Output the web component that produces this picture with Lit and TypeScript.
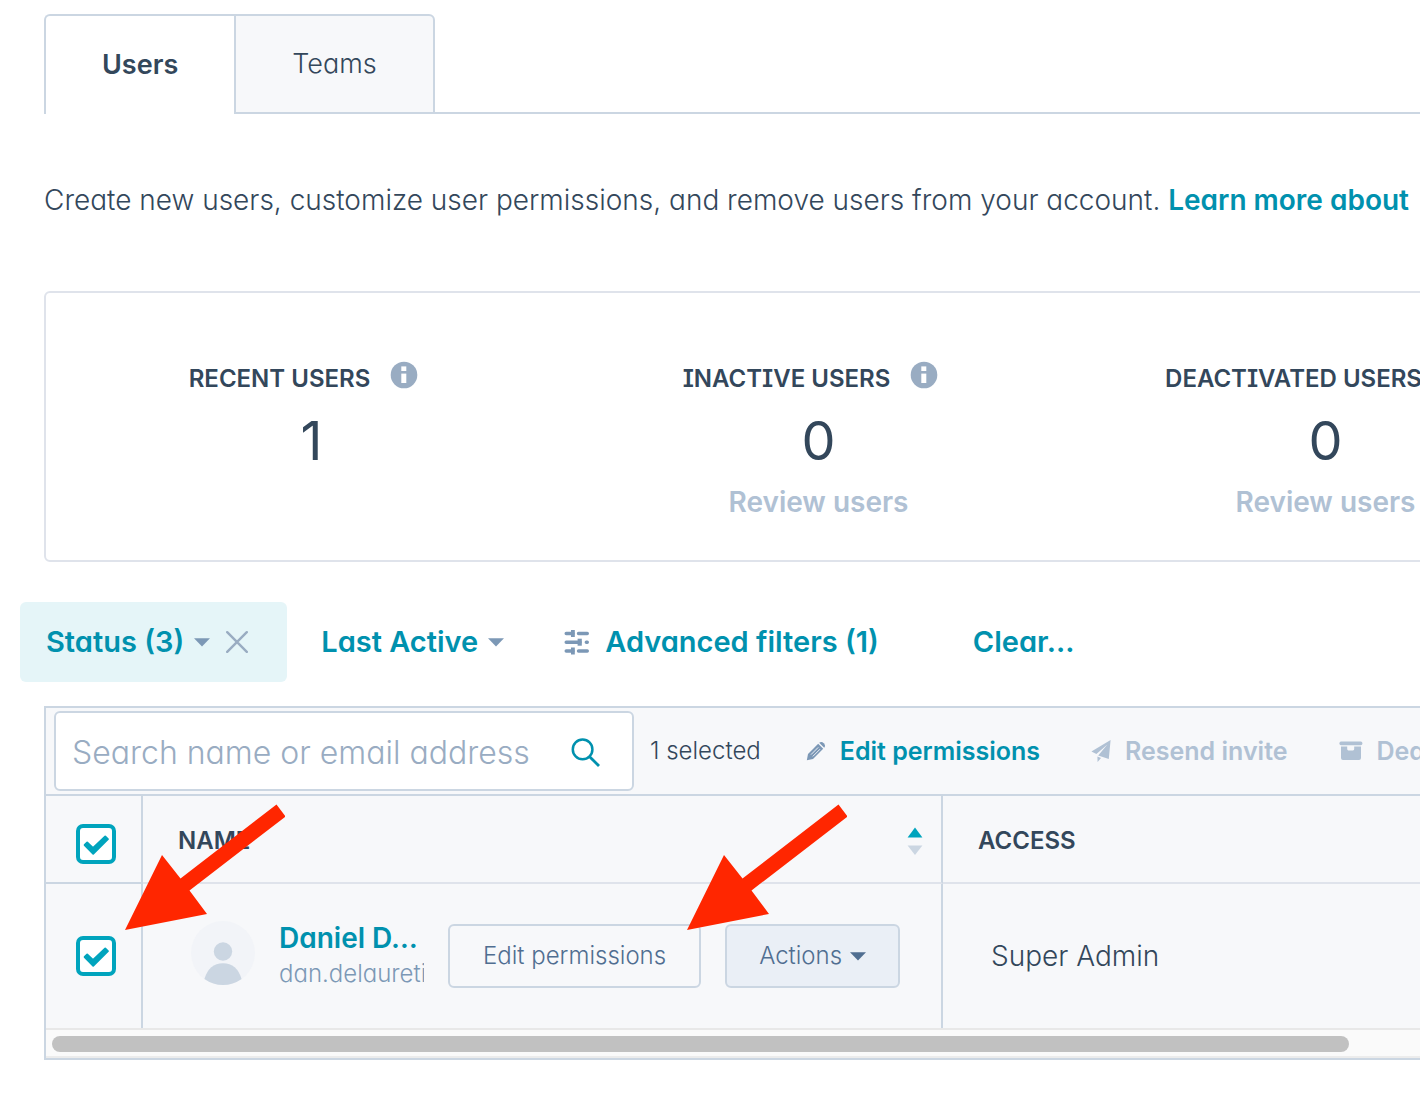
import { LitElement, html, css, svg, nothing } from "lit";
import { customElement, state } from "lit/decorators.js";

const iconInfo = svg`<svg class="info" viewBox="0 0 28 28" aria-hidden="true">
  <circle cx="14" cy="14" r="13.3" fill="#99acc2"/>
  <rect x="11.3" y="5.4" width="5" height="4.6" fill="#fff"/>
  <rect x="11.3" y="12.6" width="5" height="9.4" fill="#fff"/></svg>`;

const iconCaret = svg`<svg class="caret" viewBox="0 0 16 9" aria-hidden="true">
  <path d="M0 0.3H16L8 8.6Z" fill="currentColor"/></svg>`;

const iconClose = svg`<svg class="close" viewBox="0 0 22 22" aria-hidden="true">
  <path d="M1.2 1.2L20.8 20.8M20.8 1.2L1.2 20.8" stroke="#99acc2" stroke-width="2.4" stroke-linecap="round"/></svg>`;

const iconFilters = svg`<svg class="filters-icon" viewBox="0 0 26 26" aria-hidden="true">
  <g stroke="#7c98b6" stroke-width="3.4" stroke-linecap="round">
    <path d="M2.2 4.5H9M14.5 4.5H23.3M2.2 13.2H16M22.3 13.2H23.3M2.2 22H9M14.5 22H23.3"/></g>
  <g fill="#7c98b6"><rect x="7" y="1" width="3.8" height="7"/><rect x="13.6" y="9.7" width="4.2" height="7"/><rect x="7" y="18.5" width="3.8" height="7"/></g></svg>`;

const iconSearch = svg`<svg class="search-icon" viewBox="0 0 30 30" aria-hidden="true">
  <circle cx="12.6" cy="11.4" r="9.8" fill="none" stroke="#0091ae" stroke-width="2.5"/>
  <path d="M19.4 18.4L29 28" stroke="#0091ae" stroke-width="2.8"/></svg>`;

const iconPencil = svg`<svg class="act-icon" viewBox="0 0 20 20" aria-hidden="true">
  <path d="M0.8 19.2L2 13L12.2 2.8L17.2 7.8L7 18Z" fill="#7c98b6"/>
  <path d="M13.2 1.8Q15.4 0 17.8 2.2Q20 4.6 18.2 6.8Z" fill="#7c98b6"/>
  <path d="M5 13.6L12.2 6.4M6.8 15.4L14 8.2" stroke="#f7f8fa" stroke-width="0.9"/></svg>`;

const iconPlane = svg`<svg class="act-icon" viewBox="0 0 20 22" aria-hidden="true">
  <path d="M19.6 0L0.4 11.4L5.4 14L16.4 4.4L7.2 15.4L17.8 19Z" fill="currentColor"/>
  <path d="M6.4 16.6L10 18L6.6 22Z" fill="currentColor"/></svg>`;

const iconBox = svg`<svg class="box-icon" viewBox="0 0 24 20" aria-hidden="true">
  <rect x="0.4" y="0.6" width="23" height="3.6" rx="1.6" fill="currentColor"/>
  <path d="M2 5.6H8.2V8Q8.2 9.4 9.4 9.4H14Q15.2 9.4 15.2 8V5.6H22V17Q22 19 20 19H4Q2 19 2 17Z" fill="currentColor"/></svg>`;

const iconSort = svg`<svg class="sort-icon" viewBox="0 0 16 28" aria-hidden="true">
  <path d="M0.6 10.5L8 0.6L15.4 10.5Z" fill="#00a4bd"/>
  <path d="M0.6 18.5H15.4L8 28Z" fill="#cbd6e2"/></svg>`;

const iconAvatar = svg`<svg class="avatar" viewBox="0 0 64 64" aria-hidden="true">
  <circle cx="32" cy="32" r="32" fill="#f2f4f8"/>
  <circle cx="32" cy="30.5" r="9.2" fill="#cbd6e2"/>
  <path d="M13.4 58Q18 42.4 32 42.2Q46 42.4 50.6 58Q42 64 32 64Q22 64 13.4 58Z" fill="#cbd6e2"/></svg>`;

interface Stat { label: string; value: number; review: boolean; }

@customElement("stat-column")
class StatColumn extends LitElement {
  static properties = { stat: { attribute: false } };
  declare stat: Stat;
  static styles = css`
    :host { display: flex; flex-direction: column; align-items: center; }
    .label { display: flex; align-items: center; gap: 20px; margin: 0 16px 0 0; height: 36px; font-size: 24px; font-weight: 600; line-height: 36px; white-space: nowrap; }
    .info { width: 28px; height: 28px; flex: none; margin-bottom: 8px; }
    .value { font-size: 54px; font-weight: 400; line-height: 64px; margin-top: 12px; }
    .review { border: 0; padding: 0; background: none; font: inherit; font-weight: 600; color: #b0c1d4; line-height: 36px; margin-top: 11px; }
  `;
  render() {
    return html`<h2 class="label">${this.stat.label}${iconInfo}</h2>
      <div class="value">${this.stat.value}</div>
      ${this.stat.review ? html`<button class="review" disabled>Review users</button>` : nothing}`;
  }
}

@customElement("app-root")
class AppRoot extends LitElement {
  @state() private allChecked = true;

  private stats: Stat[] = [
    { label: "RECENT USERS", value: 1, review: false },
    { label: "INACTIVE USERS", value: 0, review: true },
    { label: "DEACTIVATED USERS", value: 0, review: true },
  ];

  static styles = css`
    :host { display: block; position: relative; overflow: hidden; background: #fff; color: #33475b;
      font-family: Inter, "Liberation Sans", sans-serif; font-size: 28px; font-weight: 350; line-height: 36px;
      font-feature-settings: "cv11", "cv08"; }
    * { box-sizing: border-box; }
    button, input { font: inherit; font-feature-settings: inherit; color: inherit; margin: 0; }
    button { border: 0; background: none; padding: 0; white-space: nowrap; }
    .page { padding: 14px 0 36px 44px; }
    .tabs { display: flex; }
    .tab { height: 100px; padding: 0 56px; border: 2px solid #cbd6e2; font-size: 27px; }
    .tab.active { border-bottom: 0; border-right: 0; border-top-left-radius: 6px; font-weight: 600; }
    .tab.idle { background: #f7f8fa; border-top-right-radius: 6px; }
    .rail { flex: 1; border-bottom: 2px solid #cbd6e2; }
    .intro { margin: 68px 0 0; white-space: nowrap; }
    .link { color: #0091ae; font-weight: 600; text-decoration: none; }
    .stats { display: grid; grid-auto-flow: column; grid-auto-columns: minmax(507px, 1fr); width: max-content; min-width: 100%;
      margin-top: 73px; padding: 68px 12px 40px 12px; border: 2px solid #dfe3eb; border-radius: 6px; }
    .filters { display: flex; align-items: center; margin: 40px 0 0 -24px; height: 80px; color: #0091ae; font-size: 29px; white-space: nowrap; }
    .filters button { font-weight: 600; display: flex; align-items: center; }
    .chip { display: flex; align-items: center; gap: 16px; height: 80px; padding: 0 39px 0 26px; border-radius: 6px; background: #e5f5f8; margin-right: 34px; }
    .filters .drop { gap: 10px; }
    .caret { width: 16px; height: 9px; color: #7c98b6; flex: none; }
    .close { width: 22px; height: 22px; display: block; }
    .filters-icon { width: 26px; height: 26px; }
    .filters .advanced { gap: 15px; margin: 0 94px 0 60px; }
    .grid { margin-top: 24px; border: 2px solid #cbd6e2; border-right: 0; background: #f7f8fa; }
    .toolbar { display: flex; align-items: center; height: 88px; padding-left: 8px; border-bottom: 2px solid #cbd6e2; font-size: 24px; white-space: nowrap; }
    .search { display: flex; align-items: center; width: 580px; height: 80px; flex: none; padding: 3px 32px 0 16px;
      border: 2px solid #cbd6e2; border-radius: 6px; background: #fff; margin-right: 16px; }
    .search input { flex: 1; min-width: 0; border: 0; outline: 0; padding: 0; background: none; font-size: 32px; }
    .search input::placeholder { color: #99acc2; opacity: 1; }
    .search-icon { width: 30px; height: 30px; display: block; }
    .act { display: flex; align-items: center; gap: 14px; font-size: 25px; font-weight: 600; color: #0091ae; flex: none; }
    .act[disabled] { color: #b0c1d4; }
    .act-icon { width: 20px; height: 22px; }
    .box-icon { width: 24px; height: 20px; }
    .toolbar .edit { margin-left: 45px; }
    .toolbar .resend, .toolbar .deactivate { margin-left: 51px; }
    table { width: 100%; border-collapse: separate; border-spacing: 0; table-layout: fixed; }
    th, td { padding: 0; text-align: left; vertical-align: middle; }
    th { height: 88px; border-bottom: 2px solid #dfe3eb; font-size: 24px; font-weight: 600; padding-top: 4px; }
    th.pick { border-bottom-color: #cbd6e2; padding-top: 10px; }
    td { height: 144px; }
    .pick { width: 97px; border-right: 2px solid #cbd6e2; }
    .name { width: 800px; border-right: 2px solid #cbd6e2; }
    .name-head { display: flex; align-items: center; justify-content: space-between; padding: 0 18px 0 35px; }
    .sort-icon { width: 16px; height: 28px; display: block; }
    .box { appearance: none; display: block; width: 40px; height: 40px; margin: 0 auto 0 30px; border: 4px solid #00a4bd; border-radius: 7px; background: #fff; }
    .box:checked { background: #fff url("data:image/svg+xml,%3Csvg xmlns='http://www.w3.org/2000/svg' viewBox='0 0 32 32'%3E%3Cpath d='M4.600 17L7.200 14.400L13 19.800L25.200 8.400L28 11.200L13.200 25.800Z' fill='%2300a4bd' stroke='%2300a4bd' stroke-width='1.8' stroke-linejoin='round'/%3E%3C/svg%3E") center / 32px 32px no-repeat; }
    .person { display: flex; align-items: center; padding: 0 40px 0 48px; }
    .avatar { width: 64px; height: 64px; flex: none; margin-bottom: 6px; }
    .who { width: 145px; margin: 0 24px; overflow: hidden; white-space: nowrap; flex: none; }
    .who a { display: block; overflow: hidden; }
    .mail { font-size: 24px; color: #7c98b6; }
    .btn { height: 64px; border: 2px solid #cbd6e2; border-radius: 6px; font-size: 24px; color: #506e91; padding: 0 33px; }
    .btn.menu { display: flex; align-items: center; gap: 8px; margin-left: 24px; padding: 0 32px; background: #eaeff6; }
    .btn .caret { color: #506e91; }
    .access-head { padding-left: 35px; }
    .access { padding-left: 48px; }
    .scroll { height: 30px; padding: 6px; border-top: 2px solid #e8e8e8; border-bottom: 2px solid #ececec; background: #fafafa; }
    .thumb { width: 1297px; height: 16px; border-radius: 8px; background: #c1c1c1; }
    .arrow { position: absolute; width: 160px; height: 126px; top: 804px; }
    .first { left: 125px; }
    .second { left: 687px; }
  `;

  private toggle() { this.allChecked = !this.allChecked; }

  private arrow(which: string) {
    return html`<svg class="arrow ${which}" viewBox="0 0 160 126" aria-hidden="true">
      <path d="M0 126L37 51L55.500 74.500L151.500 0.500L160.500 12.500L64.500 86.500L82 110Z" fill="#ff2600"/></svg>`;
  }

  render() {
    return html`<main class="page">
      <div class="tabs" role="tablist">
        <button class="tab active" role="tab" aria-selected="true">Users</button>
        <button class="tab idle" role="tab" aria-selected="false">Teams</button>
        <div class="rail"></div>
      </div>
      <p class="intro">Create new users, customize user permissions, and remove users from your account. <a class="link" href="#">Learn more about</a></p>
      <section class="stats">${this.stats.map((s) => html`<stat-column .stat=${s}></stat-column>`)}</section>
      <div class="filters">
        <div class="chip">
          <button class="drop">Status (3) ${iconCaret}</button>
          <button aria-label="Remove status filter">${iconClose}</button>
        </div>
        <button class="drop">Last Active ${iconCaret}</button>
        <button class="advanced">${iconFilters} Advanced filters (1)</button>
        <button>Clear…</button>
      </div>
      <section class="grid">
        <div class="toolbar">
          <div class="search">
            <input type="text" aria-label="Search name or email address" placeholder="Search name or email address">
            <button aria-label="Search">${iconSearch}</button>
          </div>
          <span>1 selected</span>
          <button class="act edit">${iconPencil} Edit permissions</button>
          <button class="act resend" disabled>${iconPlane} Resend invite</button>
          <button class="act deactivate" disabled>${iconBox} Deactivate</button>
        </div>
        <table>
          <thead><tr>
            <th class="pick"><input class="box" type="checkbox" aria-label="Select all users" .checked=${this.allChecked} @change=${this.toggle}></th>
            <th class="name"><div class="name-head">NAME ${iconSort}</div></th>
            <th class="access-head">ACCESS</th>
          </tr></thead>
          <tbody><tr>
            <td class="pick"><input class="box" type="checkbox" aria-label="Select Daniel" .checked=${this.allChecked} @change=${this.toggle}></td>
            <td class="name"><div class="person">
              ${iconAvatar}
              <div class="who"><a class="link" href="#">Daniel D…</a><div class="mail">dan.delaureti</div></div>
              <button class="btn">Edit permissions</button>
              <button class="btn menu">Actions ${iconCaret}</button>
            </div></td>
            <td class="access">Super Admin</td>
          </tr></tbody>
        </table>
        <div class="scroll"><div class="thumb"></div></div>
      </section>
      ${this.arrow("first")}${this.arrow("second")}
    </main>`;
  }
}
